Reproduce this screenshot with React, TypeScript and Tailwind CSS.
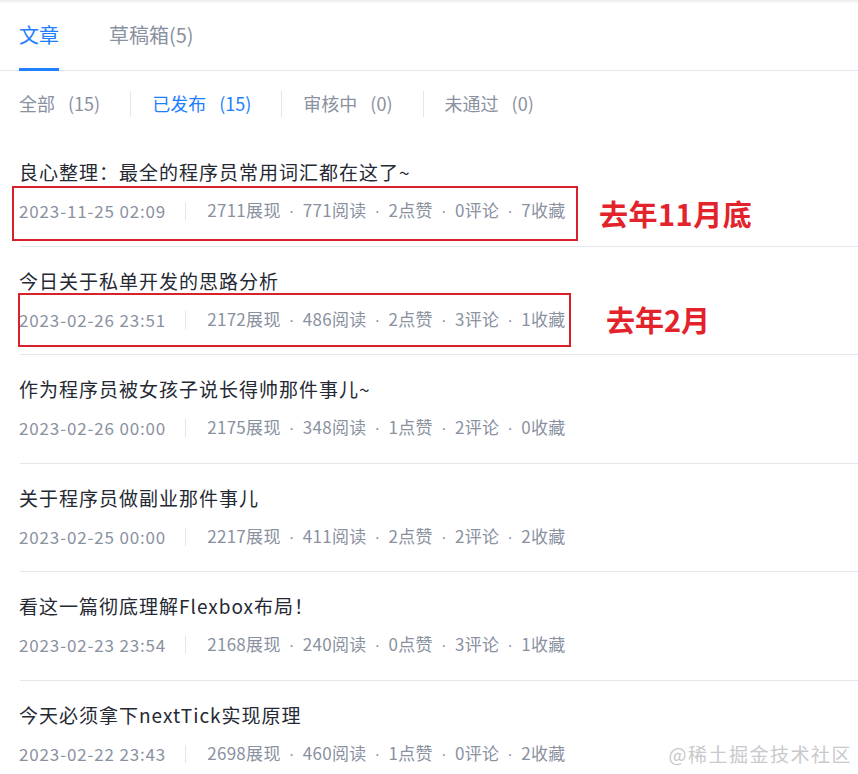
import React from 'react';

type Article = {
  title: string;
  time: string;
  views: number;
  reads: number;
  likes: number;
  comments: number;
  stars: number;
};

const articles: Article[] = [
  { title: '良心整理：最全的程序员常用词汇都在这了~', time: '2023-11-25 02:09', views: 2711, reads: 771, likes: 2, comments: 0, stars: 7 },
  { title: '今日关于私单开发的思路分析', time: '2023-02-26 23:51', views: 2172, reads: 486, likes: 2, comments: 3, stars: 1 },
  { title: '作为程序员被女孩子说长得帅那件事儿~', time: '2023-02-26 00:00', views: 2175, reads: 348, likes: 1, comments: 2, stars: 0 },
  { title: '关于程序员做副业那件事儿', time: '2023-02-25 00:00', views: 2217, reads: 411, likes: 2, comments: 2, stars: 2 },
  { title: '看这一篇彻底理解Flexbox布局！', time: '2023-02-23 23:54', views: 2168, reads: 240, likes: 0, comments: 3, stars: 1 },
  { title: '今天必须拿下nextTick实现原理', time: '2023-02-22 23:43', views: 2698, reads: 460, likes: 1, comments: 0, stars: 2 },
];

const filters = [
  { label: '全部', count: 15, active: false },
  { label: '已发布', count: 15, active: true },
  { label: '审核中', count: 0, active: false },
  { label: '未通过', count: 0, active: false },
];

const Dot = () => (
  <span className="inline-block w-[22px] text-center" style={{ fontFamily: '"Liberation Sans", sans-serif' }}>
    ·
  </span>
);

const ArticleRow: React.FC<{ a: Article; index: number }> = ({ a, index }) => {
  return (
    <div className="relative pt-[22px] pb-[22.5px] ml-5 border-b border-[#e4e6eb]">
      <div className="-ml-px h-6 leading-6 text-[19px] tracking-[1px] text-[#252933]">{a.title}</div>
      <div className="mt-[15px] h-6 flex items-center text-[17px] text-[#8a919f]">
        <span className="-ml-px tracking-[0.85px]">{a.time}</span>
        <span className="ml-[19px] mr-[21px] h-[18px] w-px bg-[#e4e6eb]" />
        <span className="tracking-[0.3px]">
          {a.views}展现<Dot />{a.reads}阅读<Dot />{a.likes}点赞<Dot />{a.comments}评论<Dot />{a.stars}收藏
        </span>
      </div>

      {/* annotations drawn over the screenshot */}
      {index === 0 && (
        <>
          <div className="absolute left-[-8px] top-[48px] w-[566px] h-[55px] border-2 border-[#d9212c]" />
          <div className="absolute left-[579px] top-[59px] text-[29px] tracking-[0.5px] font-bold text-[#e3232c] leading-8">去年11月底</div>
        </>
      )}
      {index === 1 && (
        <>
          <div className="absolute left-[-2px] top-[46px] w-[553px] h-[54px] border-2 border-[#d9212c]" />
          <div className="absolute left-[586px] top-[56px] text-[29px] font-bold text-[#e3232c] leading-8">去年2月</div>
        </>
      )}
    </div>
  );
};

export default function App() {
  return (
    <div
      className="w-[858px] h-[774px] overflow-hidden bg-white relative"
      style={{ fontFamily: '"Noto Sans CJK SC", "Noto Sans", sans-serif' }}
    >
      <div className="h-[4px] bg-gradient-to-b from-[#ececec] to-white" />

      <div className="flex h-[67px] items-end border-b border-[#e4e6eb] pl-[19px]">
        <div className="flex flex-col items-center">
          <span className="text-[20px] leading-7 text-[#1e80ff] mb-[19px]">文章</span>
          <span className="h-[3px] w-[40px] bg-[#1e80ff] -mb-px" />
        </div>
        <div className="ml-[50px] mb-[21px] text-[20px] leading-7 text-[#8a919f]">草稿箱(5)</div>
      </div>

      <div className="flex items-center h-[67px] pb-[2px] pl-[19px]">
        {filters.map((f, i) => (
          <React.Fragment key={f.label}>
            {i > 0 && <span className="ml-[30px] mr-[21px] h-[26px] w-px bg-[#e4e6eb]" />}
            <span className={`text-[18px] ${f.active ? 'text-[#1e80ff]' : 'text-[#8a919f]'}`}>
              {f.label}
              <span className="ml-[13px]">({f.count})</span>
            </span>
          </React.Fragment>
        ))}
      </div>

      <div>
        {articles.map((a, i) => (
          <ArticleRow key={a.title} a={a} index={i} />
        ))}
      </div>

      <div className="absolute right-[6px] bottom-[8px] leading-6 text-[19px] tracking-[1.5px] text-[#c8c9cc]">@稀土掘金技术社区</div>
    </div>
  );
}
